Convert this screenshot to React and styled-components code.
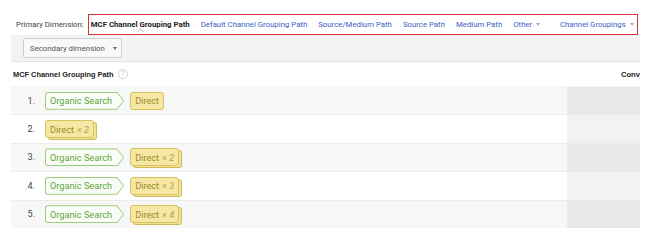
import React from "react";
import styled, { createGlobalStyle } from "styled-components";

const Global = createGlobalStyle`
  html, body { margin: 0; padding: 0; background: #fff; }
  body { font-family: Roboto, "Liberation Sans", Arial, sans-serif; color: #333; }
`;

const Page = styled.div`
  padding-top: 14px;
  width: 654px;
`;

const DimRow = styled.div`
  display: flex;
  align-items: center;
  height: 21px;
  padding-left: 16px;
  gap: 4px;
`;

const DimLabel = styled.span`
  font-size: 7.8px;
  color: #444;
  white-space: nowrap;
`;

const Nav = styled.nav`
  box-sizing: border-box;
  width: 550px;
  height: 21px;
  border: 1.5px solid #d8313a;
  display: flex;
  align-items: center;
  padding: 0 3px 0 2px;
  gap: 11px;
`;

const NavItem = styled.span`
  position: relative;
  font-size: 7.8px;
  white-space: nowrap;
  color: ${(p) => (p.$active ? "#222" : "#3d5ec6")};
  font-weight: ${(p) => (p.$active ? 700 : 400)};
  margin-left: ${(p) => (p.$push ? "auto" : "0")};
  display: inline-flex;
  align-items: center;
  gap: 2px;
  ${(p) =>
    p.$active &&
    `
    &::after {
      content: "";
      position: absolute;
      left: 50%;
      bottom: -5px;
      width: 4px;
      height: 4px;
      margin-left: -2px;
      border-left: 1px solid #cfcfcf;
      border-top: 1px solid #cfcfcf;
      transform: rotate(45deg);
    }
  `}
`;

const Caret = styled.span`
  display: inline-block;
  width: 0;
  height: 0;
  border-left: 2.5px solid transparent;
  border-right: 2.5px solid transparent;
  border-top: 3px solid ${(p) => p.$color || "#aab"};
  margin-left: ${(p) => p.$gap || 2}px;
`;

const Strip = styled.div`
  box-sizing: border-box;
  margin-left: 11px;
  width: 629px;
  height: 27px;
  background: #f3f3f3;
  border-bottom: 1px solid #e4e4e4;
  display: flex;
  align-items: center;
  padding-left: 12px;
`;

const SelectButton = styled.div`
  box-sizing: border-box;
  height: 20px;
  width: 99px;
  border: 1px solid #cfcfcf;
  border-radius: 2px;
  background: #f9f9f9;
  display: flex;
  align-items: center;
  padding: 0 0 0 6px;
  font-size: 7.8px;
  color: #555;
  white-space: nowrap;
`;

const Table = styled.div`
  margin-left: 11px;
  width: 629px;
  overflow: hidden;
`;

const HeadRow = styled.div`
  display: flex;
  align-items: center;
  height: 24px;
`;

const HeadTitle = styled.div`
  flex: 1;
  display: flex;
  align-items: center;
  gap: 4px;
  padding-left: 2px;
  font-family: "Liberation Sans", Arial, sans-serif;
  font-weight: 700;
  font-size: 7.4px;
  color: #222;
  white-space: nowrap;
`;

const Help = styled.span`
  box-sizing: border-box;
  width: 10px;
  height: 10px;
  border-radius: 50%;
  border: 1px solid #d2d2d2;
  color: #c2c2c2;
  font-family: Roboto, sans-serif;
  font-weight: 400;
  font-size: 7px;
  display: inline-flex;
  align-items: center;
  justify-content: center;
  line-height: 1;
`;

const ConvHead = styled.div`
  width: 73px;
  box-sizing: border-box;
  padding-left: 54px;
  font-family: "Liberation Sans", Arial, sans-serif;
  font-weight: 700;
  font-size: 7.6px;
  color: #222;
  white-space: nowrap;
  overflow: hidden;
`;

const Row = styled.div`
  display: flex;
  align-items: stretch;
  height: 28.4px;
  background: ${(p) => (p.$odd ? "#f7f7f7" : "#fff")};
  border-top: 1px solid ${(p) => (p.$first ? "transparent" : "#ececec")};
  box-sizing: border-box;
`;

const Num = styled.div`
  width: 24px;
  text-align: right;
  font-size: 9px;
  color: #444;
  display: flex;
  align-items: center;
  justify-content: flex-end;
`;

const PathCell = styled.div`
  flex: 1;
  display: flex;
  align-items: center;
  padding-left: 10px;
  gap: 6px;
`;

const ConvCell = styled.div`
  width: 73px;
  background: ${(p) => (p.$odd ? "#e9e9e9" : "#f2f2f2")};
`;

const ArrowChip = styled.span`
  display: inline-block;
  height: 18px;
  padding: 1px;
  box-sizing: border-box;
  background: #9ccd7c;
  clip-path: polygon(0 0, calc(100% - 7px) 0, 100% 50%, calc(100% - 7px) 100%, 0 100%);
  border-radius: 3px 0 0 3px;
`;

const ArrowInner = styled.span`
  display: flex;
  align-items: center;
  height: 100%;
  padding: 0 11px 0 4px;
  background: #fafdf7;
  clip-path: polygon(0 0, calc(100% - 6.4px) 0, 100% 50%, calc(100% - 6.4px) 100%, 0 100%);
  border-radius: 2px 0 0 2px;
  font-size: 9.2px;
  color: #5da63a;
  white-space: nowrap;
`;

const Chip = styled.span`
  box-sizing: border-box;
  height: 18px;
  display: inline-flex;
  align-items: center;
  padding: 0 4px;
  border: 1px solid #d6c160;
  border-radius: 3px;
  background: #f6e8a4;
  font-size: 9.2px;
  color: #9c8a27;
  white-space: nowrap;
  ${(p) =>
    p.$stacked &&
    `
    margin-right: 3px;
    box-shadow: 3px 2px 0 -1px #f3e397, 3px 2px 0 0 #d1bb58;
  `}
`;

const Count = styled.span`
  font-style: italic;
  color: #b3a143;
  margin-left: 3px;
`;

const rows = [
  { organic: true, count: 1 },
  { organic: false, count: 2 },
  { organic: true, count: 2 },
  { organic: true, count: 3 },
  { organic: true, count: 4 },
];

const navItems = [
  "Default Channel Grouping Path",
  "Source/Medium Path",
  "Source Path",
  "Medium Path",
];

export default function App() {
  return (
    <Page>
      <Global />
      <DimRow>
        <DimLabel>Primary Dimension:</DimLabel>
        <Nav>
          <NavItem $active>MCF Channel Grouping Path</NavItem>
          {navItems.map((n) => (
            <NavItem key={n}>{n}</NavItem>
          ))}
          <NavItem>
            Other
            <Caret />
          </NavItem>
          <NavItem $push>
            Channel Groupings
            <Caret />
          </NavItem>
        </Nav>
      </DimRow>
      <Strip>
        <SelectButton>
          Secondary dimension
          <Caret $color="#666" $gap={8} />
        </SelectButton>
      </Strip>
      <Table>
        <HeadRow>
          <HeadTitle>
            MCF Channel Grouping Path
            <Help>?</Help>
          </HeadTitle>
          <ConvHead>Conversions</ConvHead>
        </HeadRow>
        {rows.map((r, i) => (
          <Row key={i} $odd={i % 2 === 0} $first={i === 0}>
            <Num>{i + 1}.</Num>
            <PathCell>
              {r.organic && (
                <ArrowChip>
                  <ArrowInner>Organic Search</ArrowInner>
                </ArrowChip>
              )}
              <Chip $stacked={r.count > 1}>
                Direct
                {r.count > 1 && <Count>× {r.count}</Count>}
              </Chip>
            </PathCell>
            <ConvCell $odd={i % 2 === 0} />
          </Row>
        ))}
      </Table>
    </Page>
  );
}
